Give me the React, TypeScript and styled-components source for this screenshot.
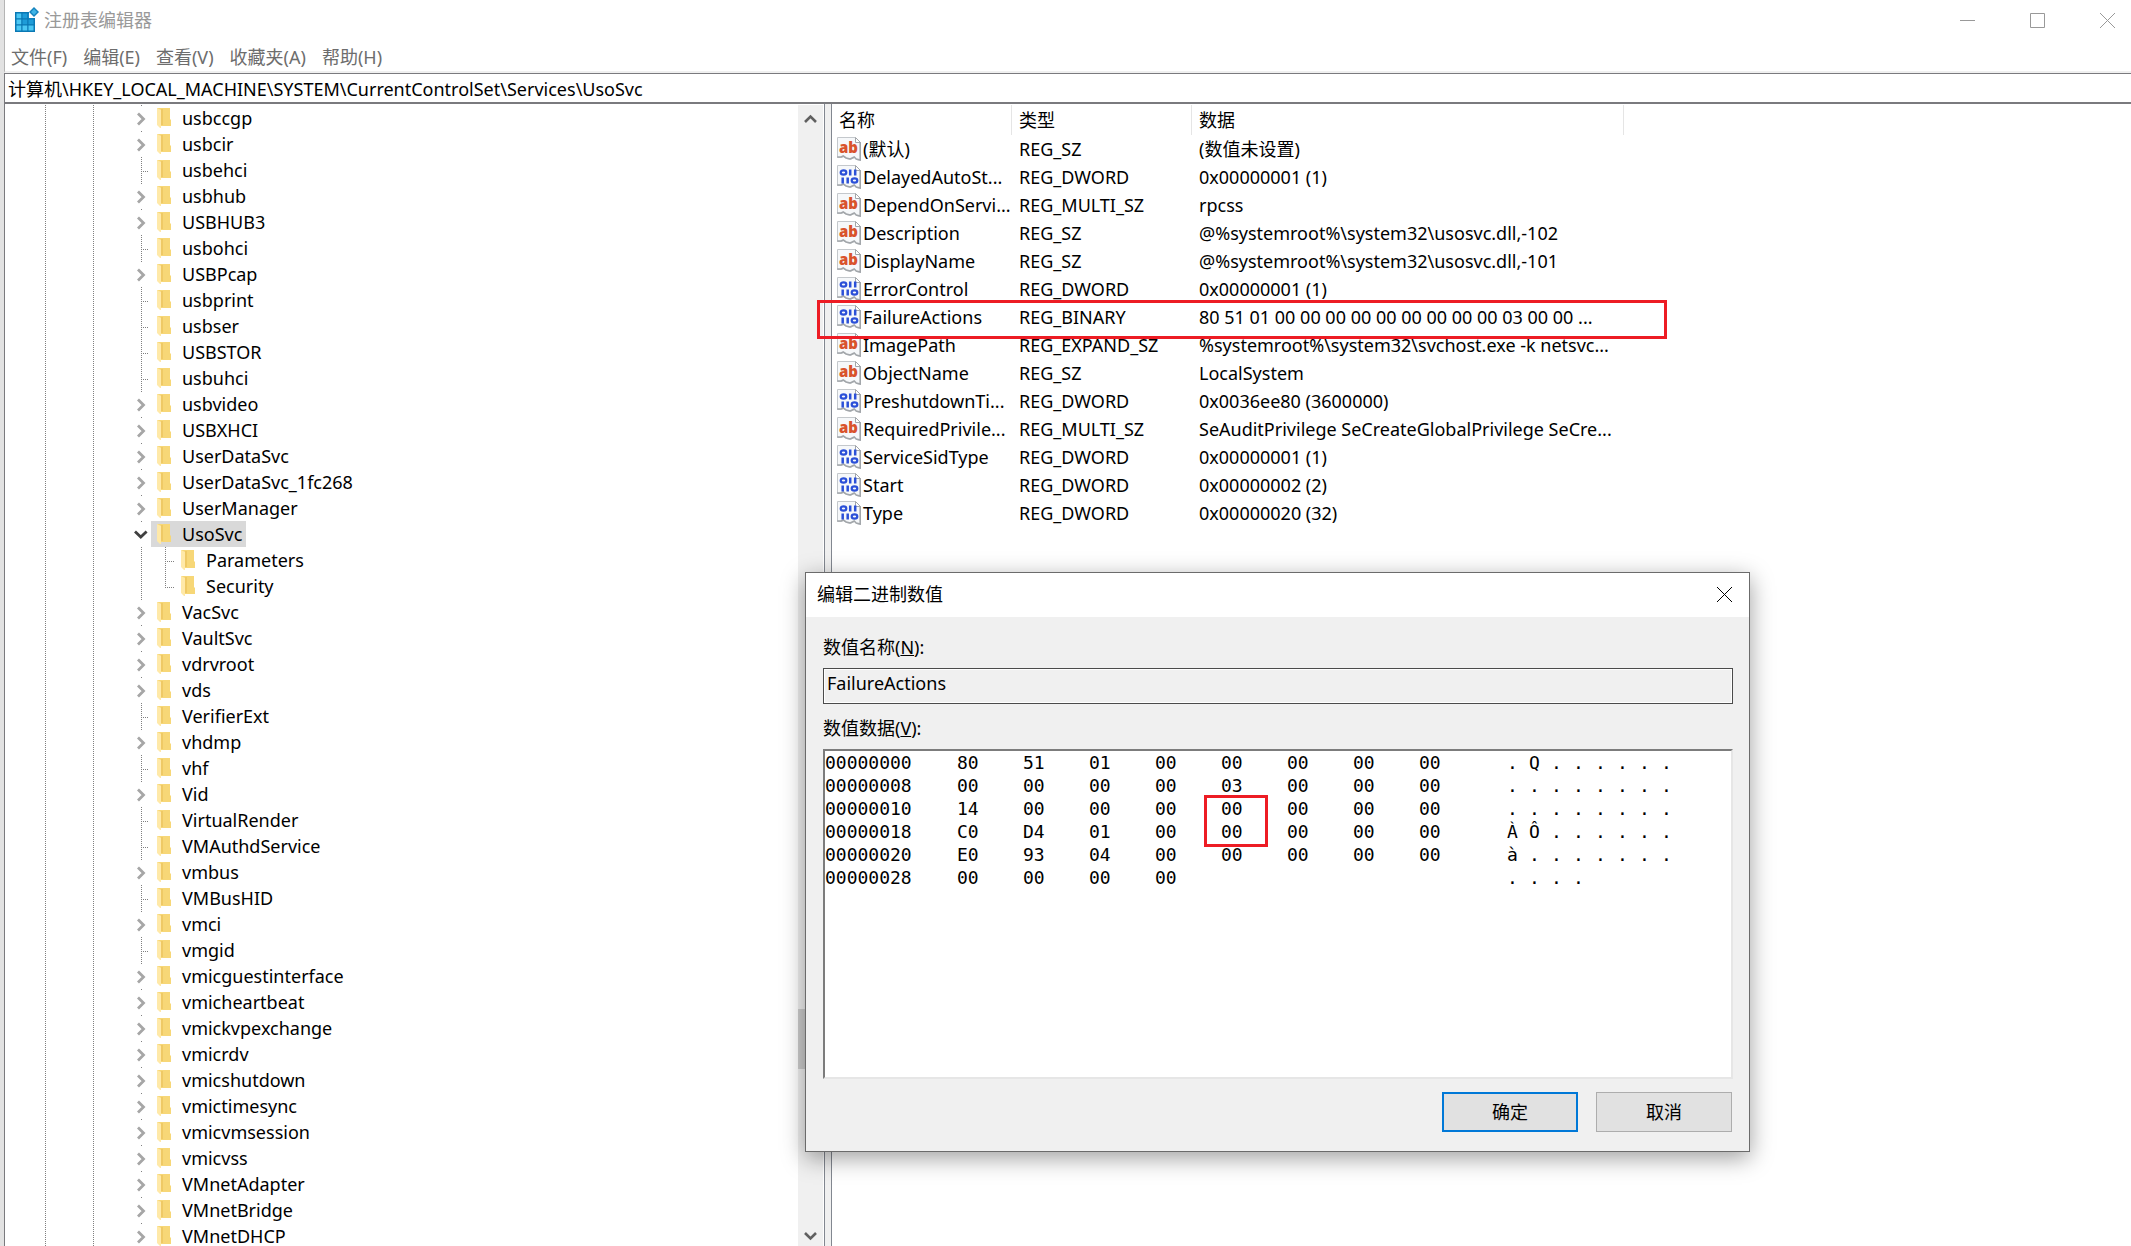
import React from "react";
import styled, { createGlobalStyle, css } from "styled-components";

const ui = `"Noto Sans", "Noto Sans CJK SC", sans-serif`;
const mono = `"DejaVu Sans Mono", "Liberation Mono", monospace`;

const GlobalStyle = createGlobalStyle`
  *, *::before, *::after { box-sizing: border-box; }
  body { margin: 0; background: #fff; color: #000; font-family: ${ui}; font-size: 18px; line-height: 26px; }
  button, input { font: inherit; color: inherit; margin: 0; padding: 0; border: 0; background: none; border-radius: 0; }
  ul { list-style: none; margin: 0; padding: 0; }
  svg { display: block; flex: none; }
`;

const Window = styled.div`
  position: relative;
  display: flex;
  flex-direction: column;
  height: 100vh;
  overflow: hidden;
  border-left: 4px solid #e2e2e2;
`;

const TitleBar = styled.header`
  display: flex;
  align-items: center;
  height: 40px;
  padding-left: 10px;
  border-left: 1px solid #b4b4b4;
  color: #999;
`;

const Title = styled.h1`
  flex: 1;
  margin: 0 0 0 5px;
  font-size: 18px;
  font-weight: 400;
`;

const WindowButtons = styled.div`
  display: flex;
  margin-right: -11px;
`;

const WindowButton = styled.button`
  display: grid;
  place-items: center;
  width: 70px;
  height: 40px;
`;

const MenuBar = styled.nav`
  display: flex;
  gap: 16px;
  height: 33px;
  padding: 4px 0 0 6px;
  border-left: 1px solid #b4b4b4;
  border-bottom: 2px solid #f0f0f0;
  color: #6d6d6d;
`;

const MenuItem = styled.button`
  height: 26px;
  white-space: nowrap;
`;

const AddressBar = styled.input`
  height: 31px;
  flex: none;
  padding: 0 0 1px 3px;
  border: solid #7a7a7e;
  border-width: 1px 0 2px 1px;
  outline: none;
`;

const Body = styled.main`
  flex: 1;
  display: flex;
  min-height: 0;
  border-left: 1px solid #7a7a7e;
`;

const TreePane = styled.ul`
  flex: 0 0 793px;
  padding-top: 1px;
  overflow: hidden;
`;

const dotsDown = css`
  background-image: repeating-linear-gradient(#808080 0 1px, transparent 1px 2px);
`;

const TreeRow = styled.li`
  display: flex;
  height: 26px;
  padding-left: 40px;
`;

const Guide = styled.span<{ $width: number; $line?: boolean }>`
  flex: 0 0 ${(p) => p.$width}px;
  ${dotsDown}
  background-size: 1px 100%;
  background-repeat: no-repeat;
`;

const GuideOffset = styled(Guide)`
  background-position: 8px 0;
`;

const NodeLabel = styled.span<{ $selected?: boolean }>`
  display: flex;
  align-items: center;
  gap: 11px;
  padding: 0 4px 0 6px;
  white-space: nowrap;
  background: ${(p) => (p.$selected ? "#d9d9d9" : "transparent")};
`;

const ScrollBar = styled.div`
  flex: 0 0 25px;
  display: flex;
  flex-direction: column;
  margin: 1px 1px 0 0;
  background: #f0f0f0;
`;

const ScrollButton = styled.button<{ $height: number }>`
  display: grid;
  place-items: center;
  height: ${(p) => p.$height}px;
`;

const Track = styled.div<{ $grow: number }>`
  flex: ${(p) => p.$grow} 0 0;
`;

const Thumb = styled.div`
  height: 60px;
  background: #cdcdcd;
`;

const Splitter = styled.div`
  flex: 0 0 8px;
  background: #f0f0f0;
  border: solid #828790;
  border-width: 0 1px;
`;

const ListPane = styled.section`
  flex: 1;
  min-width: 0;
  padding-top: 1px;
`;

const ValueTable = styled.table`
  width: 100%;
  table-layout: fixed;
  border-collapse: separate;
  border-spacing: 0;
  white-space: nowrap;
`;

const Col = styled.col<{ $width?: number }>`
  width: ${(p) => (p.$width ? p.$width + "px" : "auto")};
`;

const HeadCell = styled.th`
  height: 30px;
  padding: 0 0 0 7px;
  text-align: left;
  font-weight: 400;
  border-right: 1px solid #e5e5e5;
  &:last-child { border-right: 0; }
`;

const ValueCell = styled.td`
  height: 28px;
  padding: 0 0 0 7px;
`;

const NameCell = styled.div`
  position: relative;
  display: flex;
  align-items: center;
  gap: 2px;
  height: 28px;
  margin-left: -2px;
`;

const Marker = styled.span`
  position: absolute;
  z-index: 2;
  border: 3px solid #ed1c24;
  pointer-events: none;
`;

const RowMarker = styled(Marker)`
  left: -20px;
  top: -3px;
  width: 850px;
  height: 39px;
`;

const ByteMarker = styled(Marker)`
  left: -17px;
  top: -2px;
  width: 64px;
  height: 52px;
`;

const Dialog = styled.form`
  position: absolute;
  z-index: 3;
  left: 801px;
  top: 572px;
  width: 945px;
  background: #f0f0f0;
  border: 1px solid #6b6b6b;
  box-shadow: 0 6px 22px rgba(0, 0, 0, 0.38);
`;

const DialogTitle = styled.div`
  display: flex;
  align-items: center;
  justify-content: space-between;
  height: 44px;
  padding: 0 0 2px 11px;
  background: #fff;
`;

const DialogHeading = styled.h2`
  margin: 0;
  font-size: 18px;
  font-weight: 400;
`;

const CloseButton = styled.button`
  display: grid;
  place-items: center;
  width: 50px;
  height: 42px;
`;

const DialogBody = styled.div`
  display: flex;
  flex-direction: column;
  padding: 17px 16px 19px 17px;
`;

const FieldLabel = styled.label`
  height: 26px;
  margin-bottom: 8px;
`;

const NameField = styled.input`
  height: 36px;
  margin-bottom: 11px;
  padding: 0 3px 6px;
  border: 1px solid #4b4b4b;
  box-shadow: inset 0 0 0 1px #fff;
  outline: none;
`;

const HexBox = styled.div`
  height: 330px;
  margin-bottom: 13px;
  background: #fff;
  border: 2px solid;
  border-color: #7c7c7c #e6e6e6 #e6e6e6 #7c7c7c;
`;

const HexTable = styled.table`
  border-collapse: collapse;
  table-layout: fixed;
  width: 858px;
  font-family: ${mono};
  font-size: 18px;
  line-height: 23px;
`;

const HexCell = styled.td`
  padding: 0;
  height: 23px;
`;

const Offset = styled.th`
  padding: 0;
  text-align: left;
  font-weight: 400;
`;

const ByteValue = styled.div`
  position: relative;
`;

const Buttons = styled.div`
  display: flex;
  justify-content: flex-end;
  gap: 18px;
  padding-right: 1px;
`;

const PushButton = styled.button<{ $primary?: boolean }>`
  width: 136px;
  height: 40px;
  background: #e1e1e1;
  border: ${(p) => (p.$primary ? "2px solid #0078d7" : "1px solid #adadad")};
`;

type NodeData = { name: string; kind?: "leaf" | "open" | "child" | "lastChild" };

const leaves = new Set(["usbehci", "usbohci", "usbprint", "usbser", "USBSTOR", "usbuhci", "VerifierExt", "vhf", "VirtualRender", "VMAuthdService", "VMBusHID", "vmgid"]);

const nodes: NodeData[] = (
  "usbccgp usbcir usbehci usbhub USBHUB3 usbohci USBPcap usbprint usbser USBSTOR usbuhci usbvideo USBXHCI UserDataSvc UserDataSvc_1fc268 UserManager UsoSvc Parameters Security VacSvc VaultSvc vdrvroot vds VerifierExt vhdmp vhf Vid VirtualRender VMAuthdService vmbus VMBusHID vmci vmgid vmicguestinterface vmicheartbeat vmickvpexchange vmicrdv vmicshutdown vmictimesync vmicvmsession vmicvss VMnetAdapter VMnetBridge VMnetDHCP"
)
  .split(" ")
  .map((name) => ({
    name,
    kind:
      name === "UsoSvc" ? "open"
      : name === "Parameters" ? "child"
      : name === "Security" ? "lastChild"
      : leaves.has(name) ? "leaf"
      : undefined,
  }));

const values: [string, string, string, string][] = [
  ["s", "(默认)", "REG_SZ", "(数值未设置)"],
  ["b", "DelayedAutoSt...", "REG_DWORD", "0x00000001 (1)"],
  ["s", "DependOnServi...", "REG_MULTI_SZ", "rpcss"],
  ["s", "Description", "REG_SZ", "@%systemroot%\\system32\\usosvc.dll,-102"],
  ["s", "DisplayName", "REG_SZ", "@%systemroot%\\system32\\usosvc.dll,-101"],
  ["b", "ErrorControl", "REG_DWORD", "0x00000001 (1)"],
  ["b", "FailureActions", "REG_BINARY", "80 51 01 00 00 00 00 00 00 00 00 00 03 00 00 ..."],
  ["s", "ImagePath", "REG_EXPAND_SZ", "%systemroot%\\system32\\svchost.exe -k netsvc..."],
  ["s", "ObjectName", "REG_SZ", "LocalSystem"],
  ["b", "PreshutdownTi...", "REG_DWORD", "0x0036ee80 (3600000)"],
  ["s", "RequiredPrivile...", "REG_MULTI_SZ", "SeAuditPrivilege SeCreateGlobalPrivilege SeCre..."],
  ["b", "ServiceSidType", "REG_DWORD", "0x00000001 (1)"],
  ["b", "Start", "REG_DWORD", "0x00000002 (2)"],
  ["b", "Type", "REG_DWORD", "0x00000020 (32)"],
];

const hexRows: [string, string, string][] = [
  ["00000000", "80 51 01 00 00 00 00 00", ".Q......"],
  ["00000008", "00 00 00 00 03 00 00 00", "........"],
  ["00000010", "14 00 00 00 00 00 00 00", "........"],
  ["00000018", "C0 D4 01 00 00 00 00 00", "ÀÔ......"],
  ["00000020", "E0 93 04 00 00 00 00 00", "à......."],
  ["00000028", "00 00 00 00", "...."],
];

const AppIcon = () => (
  <svg width="24" height="26" viewBox="0 0 24 26" aria-hidden="true">
    <rect x="0" y="5" width="20" height="20" fill="#0a78b4" />
    {[0, 1, 2].map((r) =>
      [0, 1, 2].map((c) => (
        <rect key={`${r}${c}`} x={1 + c * 6} y={6 + r * 6} width="6" height="6" stroke="#0a78b4" fill={r === 2 || c === 0 ? "#4cc8f4" : "#1e9cd8"} />
      )),
    )}
    <path d="M14 4h7v7h-7z" fill="#fff" />
    <path d="M19 0l5 5-5 5-5-5z" fill="#1583bd" />
    <path d="M19 2l3 3-3 3-3-3z" fill="#3fb4e6" />
  </svg>
);

const CloseGlyph = ({ color }: { color: string }) => (
  <svg width="15" height="15" viewBox="0 0 15 15" stroke={color} aria-hidden="true">
    <path d="M0 0l15 15M15 0L0 15" />
  </svg>
);

const Folder = () => (
  <svg width="14" height="22" viewBox="0 0 14 22" aria-hidden="true">
    <path d="M0 1h13v11l1 1v6H4z" fill="#f7d777" />
    <path d="M4 2h2v16H4z" fill="#efc965" />
    <path d="M0 1l4 2v18h-1l-3-3z" fill="#ffe9a8" />
  </svg>
);

const Expander = ({ kind }: { kind?: NodeData["kind"] }) => (
  <svg width="18" height="26" viewBox="0 0 18 26" shapeRendering={kind && kind !== "open" ? "crispEdges" : "auto"} aria-hidden="true">
    {!kind && (
      <>
        <rect x="8" y="0" width="1" height="1" fill="#808080" />
        <path d="M5 8.500l5.500 5.500-5.500 5.500" fill="none" stroke="#a6a6a6" strokeWidth="2.800" />
      </>
    )}
    {kind === "open" && (
      <>
        <rect x="8" y="0" width="1" height="1" fill="#808080" />
        <path d="M2 10.500l5.800 5.500 5.800-5.500" fill="none" stroke="#404040" strokeWidth="2.800" />
      </>
    )}
    {kind && kind !== "open" && (
      <>
        <path d={kind === "lastChild" ? "M8.500 0v15" : "M8.500 0v26"} stroke="#808080" strokeDasharray="1 1" />
        <path d={kind === "leaf" ? "M8 14.500h8" : "M8 14.500h11"} stroke="#808080" strokeDasharray="1 1" />
      </>
    )}
  </svg>
);

const ValueIcon = ({ kind }: { kind: string }) => (
  <svg width="24" height="24" viewBox="0 0 24 24" aria-hidden="true">
    <path d="M.5.500h18l5 5v18l-4-1-2-2-4 2-4-1-3-2-2 1h-4z" fill="#f6f8fa" stroke="#c4c8cc" />
    <path d="M23.200 5v18l-4-1-2-2-4 2-4-1-3-2-2 1h-4" fill="none" stroke="#a2a6aa" strokeWidth="1.600" />
    <path d="M18.500.500v5h5z" fill="#fff" stroke="#a2a6aa" />
    {kind === "s" ? (
      <text x="2" y="16" fontFamily="Open Sans, sans-serif" fontWeight="800" fontSize="15" fill="#d9532c">ab</text>
    ) : (
      <g fill="none" stroke="#2b50d8" strokeWidth="2.200">
        <ellipse cx="6.500" cy="7.500" rx="2.800" ry="2.200" />
        <path d="M13.200 4.500v6M18.200 4.500v6M5.700 12.500v6M10.700 12.500v6" strokeWidth="2.500" />
        <ellipse cx="17.500" cy="15.500" rx="2.800" ry="2.200" />
      </g>
    )}
  </svg>
);

const Arrow = ({ up }: { up?: boolean }) => (
  <svg width="13" height="10" viewBox="0 0 13 10" aria-hidden="true">
    <path d={up ? "M1 8l5.500-5.500L12 8" : "M1 2l5.500 5.500L12 2"} fill="none" stroke="#606060" strokeWidth="2.600" />
  </svg>
);

const TreeNode = ({ name, kind }: NodeData) => {
  const nested = kind === "child" || kind === "lastChild";
  return (
    <TreeRow role="treeitem" aria-selected={kind === "open"}>
      <Guide $width={48} />
      <Guide $width={40} />
      {nested && <GuideOffset $width={24} />}
      <Expander kind={kind} />
      <NodeLabel $selected={kind === "open"}>
        <Folder />
        {name}
      </NodeLabel>
    </TreeRow>
  );
};

export default function App() {
  return (
    <Window>
      <GlobalStyle />
      <TitleBar>
        <AppIcon />
        <Title>注册表编辑器</Title>
        <WindowButtons>
          <WindowButton aria-label="最小化">
            <svg width="15" height="15" viewBox="0 0 15 15" stroke="#999"><path d="M0 7.500h15" /></svg>
          </WindowButton>
          <WindowButton aria-label="最大化">
            <svg width="15" height="15" viewBox="0 0 15 15" stroke="#999" fill="none"><path d="M.5.500h14v14H.5z" /></svg>
          </WindowButton>
          <WindowButton aria-label="关闭">
            <CloseGlyph color="#999" />
          </WindowButton>
        </WindowButtons>
      </TitleBar>
      <MenuBar>
        {["文件(F)", "编辑(E)", "查看(V)", "收藏夹(A)", "帮助(H)"].map((m) => (
          <MenuItem key={m}>{m}</MenuItem>
        ))}
      </MenuBar>
      <AddressBar aria-label="地址" defaultValue={"计算机\\HKEY_LOCAL_MACHINE\\SYSTEM\\CurrentControlSet\\Services\\UsoSvc"} />
      <Body>
        <TreePane role="tree">
          {nodes.map((n) => (
            <TreeNode key={n.name} {...n} />
          ))}
        </TreePane>
        <ScrollBar>
          <ScrollButton $height={28} aria-label="向上滚动"><Arrow up /></ScrollButton>
          <Track $grow={876} />
          <Thumb />
          <Track $grow={157} />
          <ScrollButton $height={20} aria-label="向下滚动"><Arrow /></ScrollButton>
        </ScrollBar>
        <Splitter />
        <ListPane>
          <ValueTable>
            <colgroup>
              <Col $width={180} />
              <Col $width={180} />
              <Col $width={432} />
              <Col />
            </colgroup>
            <thead>
              <tr>
                <HeadCell>名称</HeadCell>
                <HeadCell>类型</HeadCell>
                <HeadCell>数据</HeadCell>
                <HeadCell />
              </tr>
            </thead>
            <tbody>
              {values.map(([kind, name, type, data]) => (
                <tr key={name}>
                  <ValueCell>
                    <NameCell>
                      <ValueIcon kind={kind} />
                      {name}
                      {name === "FailureActions" && <RowMarker />}
                    </NameCell>
                  </ValueCell>
                  <ValueCell>{type}</ValueCell>
                  <ValueCell>{data}</ValueCell>
                  <ValueCell />
                </tr>
              ))}
            </tbody>
          </ValueTable>
        </ListPane>
      </Body>
      <Dialog role="dialog" aria-labelledby="dialog-title" onSubmit={(e) => e.preventDefault()}>
        <DialogTitle>
          <DialogHeading id="dialog-title">编辑二进制数值</DialogHeading>
          <CloseButton type="button" aria-label="关闭对话框">
            <CloseGlyph color="#000" />
          </CloseButton>
        </DialogTitle>
        <DialogBody>
          <FieldLabel htmlFor="value-name">数值名称(<u>N</u>):</FieldLabel>
          <NameField id="value-name" readOnly value="FailureActions" />
          <FieldLabel as="span" id="value-data">数值数据(<u>V</u>):</FieldLabel>
          <HexBox>
            <HexTable aria-labelledby="value-data">
              <colgroup>
                <Col $width={132} />
                {Array.from({ length: 7 }, (_, i) => <Col key={i} $width={66} />)}
                <Col $width={88} />
                {Array.from({ length: 8 }, (_, i) => <Col key={i} $width={22} />)}
              </colgroup>
              <tbody>
                {hexRows.map(([offset, bytes, text], r) => {
                  const cells = bytes.split(" ");
                  return (
                    <tr key={offset}>
                      <Offset scope="row">{offset}</Offset>
                      {Array.from({ length: 8 }, (_, c) => (
                        <HexCell key={c}>
                          <ByteValue>
                            {cells[c]}
                            {r === 2 && c === 4 && <ByteMarker />}
                          </ByteValue>
                        </HexCell>
                      ))}
                      {Array.from({ length: 8 }, (_, c) => (
                        <HexCell key={c + 8}>{text[c]}</HexCell>
                      ))}
                    </tr>
                  );
                })}
              </tbody>
            </HexTable>
          </HexBox>
          <Buttons>
            <PushButton type="submit" $primary>确定</PushButton>
            <PushButton type="button">取消</PushButton>
          </Buttons>
        </DialogBody>
      </Dialog>
    </Window>
  );
}
